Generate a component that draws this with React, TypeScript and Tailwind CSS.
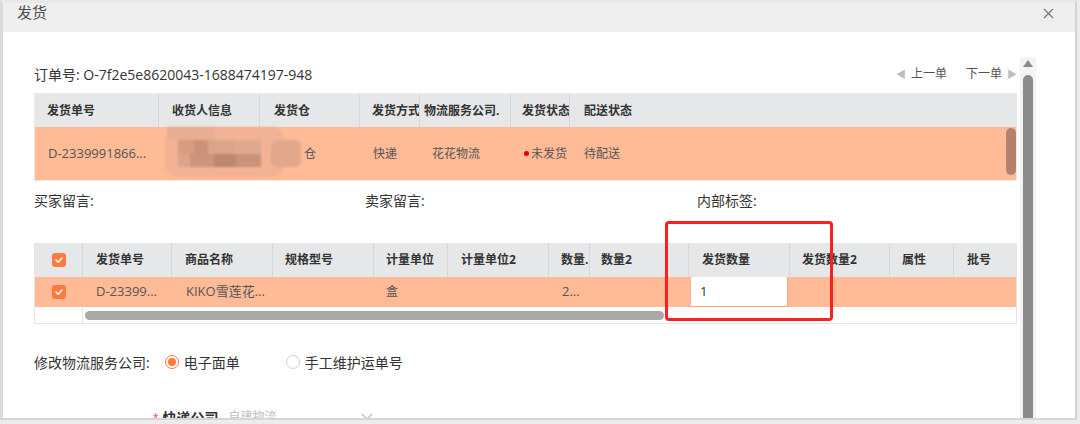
import React from "react";

const FONT = "font-['Open_Sans','Noto_Sans_CJK_SC',sans-serif]";

function Check() {
  return (
    <span className="flex h-[14px] w-[14px] items-center justify-center rounded-[3px] bg-[#ff7a3c]">
      <svg width="10" height="10" viewBox="0 0 10 10">
        <path d="M2 5.2 L4.2 7.2 L8 3" fill="none" stroke="#fff" strokeWidth="1.6" strokeLinecap="round" strokeLinejoin="round" />
      </svg>
    </span>
  );
}

export default function App() {
  return (
    <div className={`h-[424px] w-[1080px] overflow-hidden bg-[#ececec] ${FONT}`}>
      <div className="h-[420px] w-[1077px] border-l-[3px] border-t-[3px] border-r-2 border-b-2 border-l-[#dadada] border-t-[#e9e9e9] border-r-[#d2d2d2] border-b-[#d6d6d6] bg-white">
        {/* header */}
        <div className="flex h-[29px] items-start justify-between bg-[#efefef] pl-[14px] pr-[21px]">
          <span className="text-[15px] leading-[18px] text-[#4d4d4d]">发货</span>
          <svg width="11" height="11" viewBox="0 0 11 11" className="mt-[5px]">
            <path d="M1 1 L10 10 M10 1 L1 10" stroke="#777" strokeWidth="1.2" />
          </svg>
        </div>

        {/* body */}
        <div className="flex h-[386px] overflow-hidden">
          <div className="w-[1014px] pl-[31px] pt-[32px]">
            {/* order row */}
            <div className="flex h-[20px] items-center justify-between">
              <span className="text-[14px] text-[#333]">订单号: O-7f2e5e8620043-1688474197-948</span>
              <div className="flex items-center text-[12px] text-[#555]">
                <span className="mr-[5px] text-[10px] text-[#bdbdbd]">◀</span>
                <span>上一单</span>
                <span className="ml-[19px]">下一单</span>
                <span className="ml-[5px] text-[10px] text-[#bdbdbd]">▶</span>
              </div>
            </div>

            {/* table 1 */}
            <div className="mt-[9px] w-[983px] border border-[#ebebeb]">
              <div className="flex h-[33px] items-center bg-[#e6e7e9] text-[12px] font-bold text-[#333]">
                <div className="flex h-full w-[124px] items-center border-r border-[#d6d7d9] pl-[12px]">发货单号</div>
                <div className="flex h-full w-[101px] items-center border-r border-[#d6d7d9] pl-[13px]">收货人信息</div>
                <div className="flex h-full w-[100px] items-center border-r border-[#d6d7d9] pl-[14px]">发货仓</div>
                <div className="flex h-full w-[60px] items-center overflow-hidden whitespace-nowrap border-r border-[#d6d7d9] pl-[12px]">发货方式</div>
                <div className="flex h-full w-[91px] items-center overflow-hidden whitespace-nowrap border-r border-[#d6d7d9] pl-[4px]">物流服务公司.</div>
                <div className="flex h-full w-[59px] items-center overflow-hidden whitespace-nowrap border-r border-[#d6d7d9] pl-[11px]">发货状态</div>
                <div className="flex h-full flex-1 items-center pl-[14px]">配送状态</div>
              </div>
              <div className="relative flex h-[53px] items-center bg-[#ffbb96] text-[13px] text-[#555]">
                <div className="w-[124px] pl-[13px]">D-2339991866...</div>
                <div className="w-[101px]"></div>
                <div className="w-[100px] pl-[44px] text-[12px]">仓</div>
                <div className="w-[60px] pl-[13px] text-[12px]">快递</div>
                <div className="w-[91px] pl-[12px] text-[12px]">花花物流</div>
                <div className="flex w-[59px] items-center pl-[13px] text-[12px] whitespace-nowrap">
                  <span className="mr-[2px] h-[5px] w-[5px] rounded-full bg-[#e30000]"></span>未发货
                </div>
                <div className="flex-1 pl-[14px] text-[12px]">待配送</div>

                {/* mosaic blur over receiver info */}
                <div className="absolute left-[130px] top-[0px] h-[50px] w-[138px] blur-[1px]">
                  <div className="absolute left-[0px] top-[0px] h-[50px] w-[120px] rounded-[14px] bg-[#f2b293]"></div>
                  <div className="absolute left-[2px] top-[0px] h-[13px] w-[48px] bg-[#e9ad92]"></div>
                  <div className="absolute left-[13px] top-[13px] h-[14px] w-[16px] bg-[#d69d83]"></div>
                  <div className="absolute left-[29px] top-[13px] h-[14px] w-[14px] bg-[#c9927a]"></div>
                  <div className="absolute left-[43px] top-[13px] h-[14px] w-[26px] bg-[#dca58a]"></div>
                  <div className="absolute left-[69px] top-[13px] h-[14px] w-[27px] bg-[#e0a98d]"></div>
                  <div className="absolute left-[13px] top-[27px] h-[13px] w-[12px] bg-[#dca58a]"></div>
                  <div className="absolute left-[25px] top-[27px] h-[13px] w-[24px] bg-[#cb957c]"></div>
                  <div className="absolute left-[49px] top-[27px] h-[13px] w-[22px] bg-[#bb8870]"></div>
                  <div className="absolute left-[71px] top-[27px] h-[13px] w-[25px] bg-[#c8937a]"></div>
                  <div className="absolute left-[106px] top-[13px] h-[27px] w-[30px] rounded-[6px] bg-[#e2a88c]"></div>
                </div>

                <div className="absolute right-[0px] top-[1px] h-[47px] w-[10px] rounded-full bg-[#b4826b]"></div>
              </div>
            </div>

            {/* messages */}
            <div className="mt-[9px] grid h-[20px] grid-cols-[331px_332px_1fr] items-center text-[14px] text-[#333]">
              <span>买家留言:</span>
              <span>卖家留言:</span>
              <span>内部标签:</span>
            </div>

            {/* table 2 */}
            <div className="relative mt-[33px] w-[983px] border-x border-b border-[#e6e6e6]">
              <div className="flex h-[34px] items-center bg-[#e6e7e9] text-[12px] font-bold text-[#333]">
                <div className="flex h-full w-[48px] items-center justify-center border-r border-[#d6d7d9]"><Check /></div>
                <div className="flex h-full w-[89px] items-center border-r border-[#d6d7d9] pl-[13px]">发货单号</div>
                <div className="flex h-full w-[101px] items-center border-r border-[#d6d7d9] pl-[13px]">商品名称</div>
                <div className="flex h-full w-[101px] items-center border-r border-[#d6d7d9] pl-[12px]">规格型号</div>
                <div className="flex h-full w-[74px] items-center border-r border-[#d6d7d9] pl-[12px]">计量单位</div>
                <div className="flex h-full w-[101px] items-center border-r border-[#d6d7d9] pl-[13px]">计量单位2</div>
                <div className="flex h-full w-[41px] items-center overflow-hidden whitespace-nowrap border-r border-[#d6d7d9] pl-[12px]">数量.</div>
                <div className="flex h-full w-[99px] items-center border-r border-[#d6d7d9] pl-[11px]">数量2</div>
                <div className="flex h-full w-[101px] items-center border-r border-[#d6d7d9] pl-[13px]">发货数量</div>
                <div className="flex h-full w-[100px] items-center border-r border-[#d6d7d9] pl-[12px]">发货数量2</div>
                <div className="flex h-full w-[64px] items-center border-r border-[#d6d7d9] pl-[12px]">属性</div>
                <div className="flex h-full flex-1 items-center pl-[13px]">批号</div>
              </div>
              <div className="flex h-[30px] items-center bg-[#ffbb96] text-[13px] text-[#555]">
                <div className="flex w-[48px] justify-center"><Check /></div>
                <div className="w-[89px] pl-[13px]">D-23399...</div>
                <div className="w-[101px] pl-[14px]">KIKO雪莲花...</div>
                <div className="w-[101px]"></div>
                <div className="w-[74px] pl-[12px] text-[12px]">盒</div>
                <div className="w-[101px]"></div>
                <div className="w-[41px] pl-[13px]">2...</div>
                <div className="w-[99px]"></div>
                <div className="flex h-full w-[101px] items-stretch pl-[2px] pr-[2px]">
                  <div className="flex flex-1 items-center rounded-[2px] border-b border-r border-[#f6a57a] bg-white pl-[9px] text-[13px] text-[#333]">1</div>
                </div>
                <div className="flex-1"></div>
              </div>
              <div className="flex h-[16px]">
                <div className="w-[48px] border-r border-[#e6e6e6] bg-white"></div>
                <div className="flex flex-1 items-center bg-white pl-[2px]">
                  <div className="h-[9px] w-[579px] rounded-full bg-[#a9a9a9]"></div>
                </div>
              </div>

              {/* highlight box */}
              <div className="absolute left-[630px] top-[-22px] h-[100px] w-[168px] rounded-[4px] border-[3px] border-[#ff1f1f]"></div>
            </div>

            {/* logistics radio */}
            <div className="mt-[28px] flex h-[20px] items-center text-[14px] text-[#333]">
              <span>修改物流服务公司:</span>
              <span className="ml-[15px] flex h-[14px] w-[14px] items-center justify-center rounded-full border border-[#ff7a3c]">
                <span className="h-[8px] w-[8px] rounded-full bg-[#ff7a3c]"></span>
              </span>
              <span className="ml-[5px]">电子面单</span>
              <span className="ml-[46px] h-[14px] w-[14px] rounded-full border border-[#cfcfcf]"></span>
              <span className="ml-[5px]">手工维护运单号</span>
            </div>

            {/* express company */}
            <div className="mt-[35px] flex h-[20px] items-center pl-[119px]">
              <span className="text-[10px] text-[#ff3b3b]">*</span>
              <span className="ml-[4px] text-[14px] font-bold text-[#333]">快递公司</span>
              <span className="ml-[10px] text-[12px] text-[#c2c2c2]">自建物流</span>
              <svg width="12" height="8" viewBox="0 0 12 8" className="ml-[84px]">
                <path d="M1 1 L6 6 L11 1" fill="none" stroke="#bcbcbc" strokeWidth="1.2" />
              </svg>
            </div>
          </div>

          {/* page scrollbar */}
          <div className="ml-[3px] mt-[25px] flex w-[16px] flex-col items-center bg-[#f3f3f3]">
            <svg width="10" height="7" viewBox="0 0 10 7" className="mt-[3px]">
              <path d="M5 0 L10 7 L0 7 Z" fill="#8a8a8a" />
            </svg>
            <div className="mt-[8px] w-[10px] flex-1 rounded-t-full bg-[#8c8c8c]"></div>
          </div>
        </div>
      </div>
    </div>
  );
}
